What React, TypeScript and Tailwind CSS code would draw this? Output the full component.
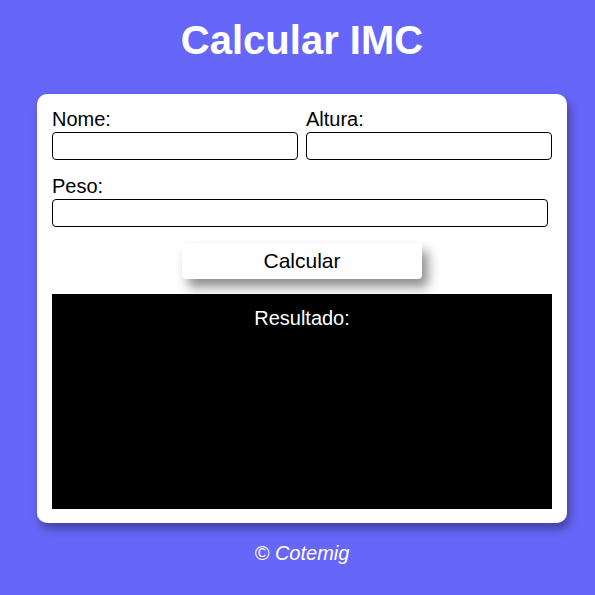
export default function App() {
  const font = { fontFamily: '"Liberation Sans", Arial, sans-serif' };
  return (
    <div className="min-h-[595px] w-[595px] bg-[#6666f8] text-black" style={font}>
      <div className="ml-[37px] w-[530px] pt-[17px]">
        <h1 className="text-center text-[40px] leading-[46px] font-bold text-white">Calcular IMC</h1>
      </div>
      <div className="ml-[37px] mt-[31px] w-[530px] rounded-[10px] bg-white px-[15px] pt-[14px] pb-[14px] shadow-[3px_6px_10px_rgba(0,0,0,0.35)]">
        <div className="grid grid-cols-2 gap-x-[8px]">
          <div className="flex flex-col">
            <label className="text-[20px] leading-[23px]">Nome:</label>
            <input className="mt-[1px] h-[28px] rounded-[4px] border border-black outline-none" />
          </div>
          <div className="flex flex-col">
            <label className="text-[20px] leading-[23px]">Altura:</label>
            <input className="mt-[1px] h-[28px] rounded-[4px] border border-black outline-none" />
          </div>
        </div>
        <div className="mt-[15px] flex flex-col">
          <label className="text-[20px] leading-[23px]">Peso:</label>
          <input className="mt-[1px] h-[28px] w-[496px] rounded-[4px] border border-black outline-none" />
        </div>
        <div className="mt-[16px] flex justify-center">
          <button className="h-[36px] w-[240px] rounded-[4px] bg-white text-[21px] leading-[24px] shadow-[6px_8px_12px_rgba(0,0,0,0.45)]">
            Calcular
          </button>
        </div>
        <div className="mt-[15px] h-[215px] bg-black pt-[13px] text-center text-[20px] leading-[23px] text-white">
          Resultado:
        </div>
      </div>
      <div className="ml-[37px] mt-[19px] w-[530px] text-center text-[20px] leading-[23px] italic text-white">© Cotemig</div>
    </div>
  );
}
